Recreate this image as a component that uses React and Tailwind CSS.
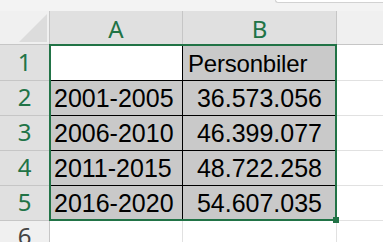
import React from "react";

const rows = [
  { n: "1", a: "", b: "Personbiler", h: "h-[36px]" },
  { n: "2", a: "2001-2005", b: "36.573.056", h: "h-[35px]" },
  { n: "3", a: "2006-2010", b: "46.399.077", h: "h-[35px]" },
  { n: "4", a: "2011-2015", b: "48.722.258", h: "h-[35px]" },
  { n: "5", a: "2016-2020", b: "54.607.035", h: "h-[35px]" },
];

const cellFont = { fontFamily: '"Liberation Sans", Arial, sans-serif' };
const headFont = { fontFamily: '"Noto Sans", "Open Sans", sans-serif' };

export default function App() {
  return (
    <div className="relative w-[383px] h-[242px] overflow-hidden bg-white">
      {/* strip above the headers */}
      <div className="h-[11px] bg-[#f3f3f3] flex justify-end">
        <div className="w-[108px] h-[3px] bg-white border-b border-l border-[#d2d2d2] rounded-bl-[6px]" />
      </div>

      {/* column headers */}
      <div className="flex h-[34px]" style={headFont}>
        <div className="relative w-[50px] bg-[#f0f0f0] border-r border-b border-[#c6c6c6]">
          <svg className="absolute right-[2px] bottom-[2px]" width="28" height="28" viewBox="0 0 28 28">
            <polygon points="28,0 28,28 0,28" fill="#dcdcdc" />
          </svg>
        </div>
        <div className="w-[133px] bg-[#e0e0e0] border-r border-b border-[#c6c6c6] flex items-center justify-center text-[24px] leading-none text-[#217346] pt-[2px]">
          A
        </div>
        <div className="w-[154px] bg-[#e0e0e0] border-r border-b border-[#c6c6c6] flex items-center justify-center text-[24px] leading-none text-[#217346] pt-[2px]">
          B
        </div>
        <div className="flex-1 bg-[#f0f0f0] border-b border-[#c6c6c6]" />
      </div>

      {rows.map((r, i) => (
        <div key={r.n} className={`flex ${r.h}`}>
          <div
            className="w-[50px] bg-[#e0e0e0] border-r border-b border-[#c6c6c6] flex items-end justify-center pb-[6px] text-[24px] leading-[24px] text-[#217346]"
            style={headFont}
          >
            {r.n}
          </div>
          <div
            className={
              r.a
                ? "w-[133px] bg-[#c9c9c9] border-r border-b border-black flex items-end pl-[4px] pb-[4px] text-[25px] leading-[25px] text-black"
                : "w-[133px] bg-white border-r border-b border-black"
            }
            style={cellFont}
          >
            {r.a}
          </div>
          <div
            className={
              i === 0
                ? "w-[154px] bg-[#c9c9c9] border-r border-b border-black flex items-end pl-[5px] pb-[4px] text-[24px] leading-[25px] tracking-[-0.2px] text-black"
                : "w-[154px] bg-[#c9c9c9] border-r border-b border-black flex items-end justify-end pr-[14px] pb-[4px] text-[25px] leading-[25px] text-black"
            }
            style={cellFont}
          >
            {r.b}
          </div>
          <div className="flex-1 border-b border-[#e1e1e1]" />
        </div>
      ))}

      {/* row 6 */}
      <div className="flex h-[21px]">
        <div
          className="w-[50px] bg-[#f0f0f0] border-r border-[#c6c6c6] flex items-start justify-center pt-[3px] text-[24px] leading-[24px] text-[#444444]"
          style={headFont}
        >
          6
        </div>
        <div className="w-[133px] border-r border-[#e1e1e1]" />
        <div className="w-[154px] border-r border-[#e1e1e1]" />
        <div className="flex-1" />
      </div>

      {/* selection outline + fill handle */}
      <div className="absolute left-[49px] top-[44px] w-[288px] h-[177px] border-2 border-[#217346] pointer-events-none" />
      <div className="absolute left-[333px] top-[217px] w-[6px] h-[6px] bg-[#217346]" />
    </div>
  );
}
